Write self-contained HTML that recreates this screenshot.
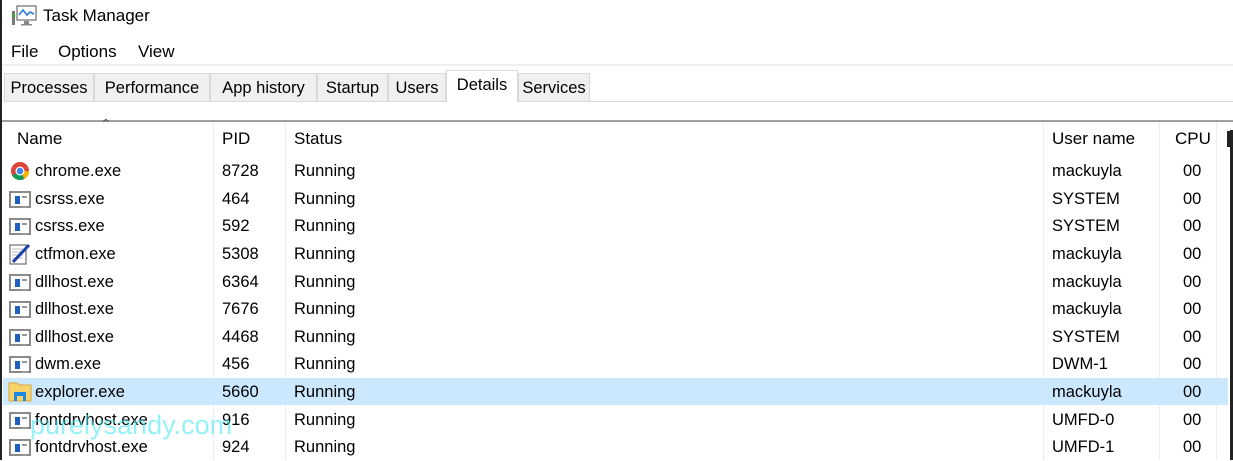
<!DOCTYPE html>
<html><head><style>
*{margin:0;padding:0;box-sizing:border-box}
body{width:1233px;height:460px;background:#fff;position:relative;overflow:hidden;font-family:"Liberation Sans",sans-serif;color:#000;font-size:16.5px}
.a{position:absolute;white-space:nowrap}
.tab{position:absolute;top:73px;height:29px;background:#f0f0f0;border:1px solid #d9d9d9;font-size:16.5px;line-height:28px;text-align:center}
.vl{position:absolute;top:122px;bottom:0;width:1px;background:#e8eef5}
.row{position:absolute;left:3px;width:1225px;height:27px;font-size:16.5px;line-height:27px}
.row span{position:absolute}
.ic{position:absolute;left:6px;top:5px;width:22px;height:17px;border:2px solid #8a8a8a;background:#fff}
.ic:before{content:"";position:absolute;left:4px;top:3px;width:5px;height:8px;background:#1f5fbf}
.ic:after{content:"";position:absolute;left:11px;top:3px;width:5px;height:8px;border-top:2px solid #999;border-bottom:2px solid #999}
</style></head><body>
<div class="a" style="left:0;top:0;width:2px;height:460px;background:#222"></div>
<div class="a" style="left:1230px;top:130px;width:3px;height:330px;background:#222"></div>
<svg class="a" style="left:11px;top:5px" width="26" height="22" viewBox="0 0 26 22">
<rect x="1" y="6" width="3" height="14" fill="#777"/><rect x="1" y="9" width="3" height="3" fill="#3a3"/>
<rect x="6" y="1" width="19" height="14" fill="#fff" stroke="#888" stroke-width="1.5"/>
<path d="M8 10 L12 5 L16 10 L19 7 L23 9" stroke="#2a7bd8" stroke-width="1.6" fill="none"/>
<rect x="13" y="16" width="5" height="3" fill="#888"/><rect x="10" y="19" width="11" height="1.5" fill="#888"/>
</svg>
<div class="a" style="left:43px;top:6px;font-size:17px">Task Manager</div>
<div class="a" style="left:11px;top:42px;font-size:17px">File</div>
<div class="a" style="left:58px;top:42px;font-size:17px">Options</div>
<div class="a" style="left:138px;top:42px;font-size:17px">View</div>
<div class="a" style="left:2px;top:64px;width:1231px;height:2px;background:#f0f0f0"></div>
<div class="tab" style="left:4px;width:90px">Processes</div>
<div class="tab" style="left:94px;width:116px">Performance</div>
<div class="tab" style="left:210px;width:107px">App history</div>
<div class="tab" style="left:317px;width:71px">Startup</div>
<div class="tab" style="left:388px;width:58px">Users</div>
<div class="tab" style="left:446px;top:70px;height:32px;width:72px;background:#fff;border-bottom:none;line-height:29px">Details</div>
<div class="tab" style="left:518px;width:72px">Services</div>
<div class="a" style="left:590px;top:101px;width:643px;height:1px;background:#d9d9d9"></div>
<div class="a" style="left:2px;top:120px;width:1231px;height:2px;background:#a0a0a0"></div>
<div class="vl" style="left:213px"></div><div class="vl" style="left:285px"></div><div class="vl" style="left:1043px"></div><div class="vl" style="left:1159px"></div><div class="vl" style="left:1216px"></div>
<div class="a" style="left:100px;top:116px;font-size:14px;color:#555">&#8963;</div>
<div class="a" style="left:17px;top:129px;font-size:17px">Name</div>
<div class="a" style="left:222px;top:129px;font-size:17px">PID</div>
<div class="a" style="left:294px;top:129px;font-size:17px">Status</div>
<div class="a" style="left:1052px;top:129px;font-size:17px">User name</div>
<div class="a" style="left:1175px;top:129px;font-size:17px">CPU</div>
<div class="a" style="left:1227px;top:131px;width:3px;height:16px;background:#222"></div>

<div class="row" style="top:158px"><svg style="position:absolute;left:7px;top:3px" width="20" height="20" viewBox="0 0 20 20"><circle cx="10" cy="10" r="9" fill="#db4437"/><path d="M10 10 L2.2 14.5 A9 9 0 0 0 14.5 17.8Z" fill="#0f9d58"/><path d="M10 10 L14.5 17.8 A9 9 0 0 0 19 10Z" fill="#f4b400"/><circle cx="10" cy="10" r="4.5" fill="#fff"/><circle cx="10" cy="10" r="3.3" fill="#4285f4"/></svg><span style="left:32px">chrome.exe</span><span style="left:219px">8728</span><span style="left:291px">Running</span><span style="left:1049px">mackuyla</span><span style="left:1180px">00</span></div>
<div class="row" style="top:186px"><div class="ic"></div><span style="left:32px">csrss.exe</span><span style="left:219px">464</span><span style="left:291px">Running</span><span style="left:1049px">SYSTEM</span><span style="left:1180px">00</span></div>
<div class="row" style="top:213px"><div class="ic"></div><span style="left:32px">csrss.exe</span><span style="left:219px">592</span><span style="left:291px">Running</span><span style="left:1049px">SYSTEM</span><span style="left:1180px">00</span></div>
<div class="row" style="top:241px"><svg style="position:absolute;left:6px;top:2px" width="22" height="22" viewBox="0 0 22 22"><rect x="1" y="2" width="16" height="19" fill="#fff" stroke="#555"/><path d="M3 6h11M3 9h11M3 12h11M3 15h11" stroke="#bbb"/><path d="M4 19 L20 2" stroke="#1a3fa8" stroke-width="3"/></svg><span style="left:32px">ctfmon.exe</span><span style="left:219px">5308</span><span style="left:291px">Running</span><span style="left:1049px">mackuyla</span><span style="left:1180px">00</span></div>
<div class="row" style="top:269px"><div class="ic"></div><span style="left:32px">dllhost.exe</span><span style="left:219px">6364</span><span style="left:291px">Running</span><span style="left:1049px">mackuyla</span><span style="left:1180px">00</span></div>
<div class="row" style="top:296px"><div class="ic"></div><span style="left:32px">dllhost.exe</span><span style="left:219px">7676</span><span style="left:291px">Running</span><span style="left:1049px">mackuyla</span><span style="left:1180px">00</span></div>
<div class="row" style="top:324px"><div class="ic"></div><span style="left:32px">dllhost.exe</span><span style="left:219px">4468</span><span style="left:291px">Running</span><span style="left:1049px">SYSTEM</span><span style="left:1180px">00</span></div>
<div class="row" style="top:351px"><div class="ic"></div><span style="left:32px">dwm.exe</span><span style="left:219px">456</span><span style="left:291px">Running</span><span style="left:1049px">DWM-1</span><span style="left:1180px">00</span></div>
<div class="row" style="top:378px;background:#cce8ff"><svg style="position:absolute;left:5px;top:2px" width="24" height="22" viewBox="0 0 24 22"><path d="M1 3h8l2 2h12v16H1z" fill="#f7d46a" stroke="#d9a93a"/><path d="M6 21v-9h12v9h-3v-5h-6v5z" fill="#1e88e5"/></svg><span style="left:32px;top:1px">explorer.exe</span><span style="left:219px;top:1px">5660</span><span style="left:291px;top:1px">Running</span><span style="left:1049px;top:1px">mackuyla</span><span style="left:1180px;top:1px">00</span></div>
<div class="row" style="top:407px"><div class="ic"></div><span style="left:32px">fontdrvhost.exe</span><span style="left:219px">916</span><span style="left:291px">Running</span><span style="left:1049px">UMFD-0</span><span style="left:1180px">00</span></div>
<div class="row" style="top:434px"><div class="ic"></div><span style="left:32px">fontdrvhost.exe</span><span style="left:219px">924</span><span style="left:291px">Running</span><span style="left:1049px">UMFD-1</span><span style="left:1180px">00</span></div>
<div class="a" style="left:30px;top:410px;font-size:27px;color:rgba(60,230,240,0.55)">purelysandy.com</div>
</body></html>
